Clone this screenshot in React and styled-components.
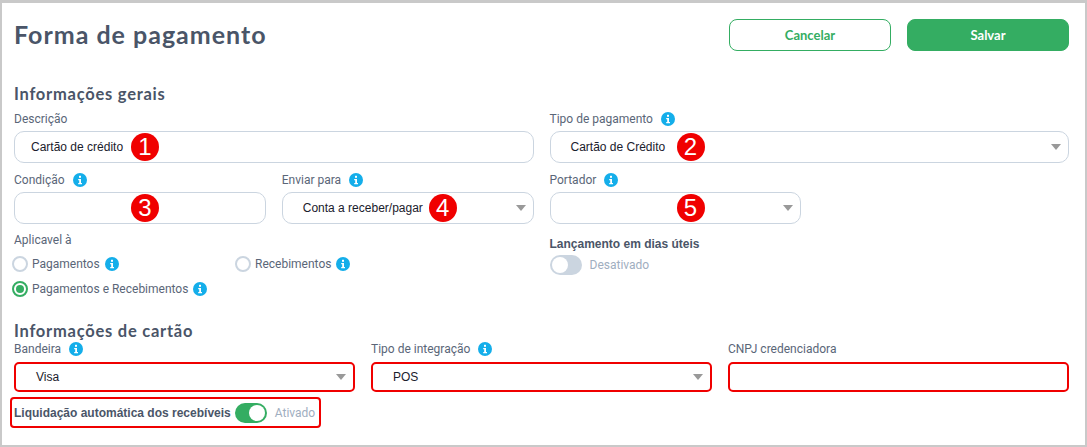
import React from "react"
import styled, { createGlobalStyle } from "styled-components"

const GlobalStyle = createGlobalStyle`
  html, body {
    margin: 0;
    padding: 0;
    background: #fff;
  }
  * {
    box-sizing: border-box;
  }
`

const Frame = styled.div`
  position: relative;
  width: 1087px;
  height: 447px;
  border: 2px solid #c9c9c9;
  border-top-width: 3px;
  padding: 0 16px 0 12px;
  background: #fff;
  font-family: Lato, "Liberation Sans", sans-serif;
  overflow: hidden;
`

const Header = styled.header`
  display: flex;
  justify-content: space-between;
  align-items: center;
  height: 32px;
  margin-top: 16px;
`

const Title = styled.h1`
  margin: 0 0 2px;
  font-size: 25px;
  font-weight: 700;
  letter-spacing: 1px;
  color: #4a5568;
`

const Actions = styled.div`
  display: flex;
  gap: 16px;
`

const Button = styled.button`
  width: 162px;
  height: 32px;
  margin-left: ${(p) => (p.$primary ? 0 : -1)}px;
  border: 1px solid #34ad62;
  border-radius: 8px;
  background: ${(p) => (p.$primary ? "#34ad62" : "#fff")};
  color: ${(p) => (p.$primary ? "#fff" : "#34ad62")};
  font-family: Lato, sans-serif;
  font-size: 13px;
  font-weight: 700;
`

const SectionTitle = styled.h2`
  margin: ${(p) => p.$top}px 0 0;
  height: 18px;
  font-size: 16.5px;
  line-height: 18px;
  font-weight: 700;
  letter-spacing: 0.75px;
  color: #4a5568;
`

const Row = styled.div`
  display: grid;
  grid-template-columns: repeat(${(p) => p.$cols}, 1fr);
  column-gap: 16px;
  margin-top: ${(p) => p.$top || 0}px;
`

const Field = styled.div`
  display: flex;
  flex-direction: column;
  min-width: 0;
`

const Label = styled.label`
  display: flex;
  align-items: center;
  gap: 8px;
  height: 18px;
  margin-bottom: ${(p) => p.$gap ?? 3}px;
  font-family: Roboto, sans-serif;
  font-size: 12px;
  color: #5a6678;
`

const Control = styled.div`
  position: relative;
  display: flex;
  align-items: center;
  height: ${(p) => (p.$alert ? 30 : 32)}px;
  padding-left: ${(p) => (p.$select ? 20 : 16)}px;
  border: ${(p) => (p.$alert ? "2px solid #f00000" : "1px solid #cbd5e0")};
  border-radius: ${(p) => (p.$alert ? 5 : 10)}px;
  background: #fff;
  font-family: "Liberation Sans", sans-serif;
  font-size: 12px;
  color: #1a202c;
`

const Arrow = styled.span`
  position: absolute;
  right: 7px;
  top: 50%;
  margin-top: -3px;
  border-left: 5px solid transparent;
  border-right: 5px solid transparent;
  border-top: 6px solid #999;
`

const Badge = styled.span`
  position: absolute;
  left: ${(p) => p.$x}px;
  top: 50%;
  width: 28px;
  height: 28px;
  margin-top: -14px;
  border-radius: 50%;
  background: #f00000;
  color: #fff;
  font-family: "Liberation Sans", sans-serif;
  font-size: 24px;
  line-height: 28px;
  text-align: center;
`

const RadioGrid = styled.div`
  display: grid;
  grid-template-columns: 223px 1fr;
  row-gap: 7px;
  margin-top: 6px;
  margin-left: -2px;
`

const RadioItem = styled.div`
  display: flex;
  align-items: center;
  height: 18px;
  font-family: Roboto, sans-serif;
  font-size: 12px;
  color: #5a6678;
`

const RadioMark = styled.span`
  display: flex;
  align-items: center;
  justify-content: center;
  width: 16px;
  height: 16px;
  margin-right: 4px;
  border: 2px solid ${(p) => (p.$on ? "#34ad62" : "#cbd5e0")};
  border-radius: 50%;
  &::after {
    content: "";
    display: ${(p) => (p.$on ? "block" : "none")};
    width: 8px;
    height: 8px;
    border-radius: 50%;
    background: #34ad62;
  }
`

const InfoWrap = styled.svg`
  flex: none;
  width: 14px;
  height: 14px;
  margin-left: ${(p) => p.$left || 0}px;
`

const BoldLabel = styled.div`
  font-family: "Liberation Sans", sans-serif;
  font-size: 12px;
  font-weight: 700;
  color: #4a5568;
  white-space: nowrap;
  margin-top: ${(p) => p.$top || 0}px;
`

const SwitchRow = styled.div`
  display: flex;
  align-items: center;
  gap: 8px;
  margin-top: ${(p) => p.$top || 0}px;
`

const Track = styled.span`
  display: flex;
  justify-content: ${(p) => (p.$on ? "flex-end" : "flex-start")};
  align-items: center;
  width: 32px;
  height: 20px;
  padding: 2px;
  border-radius: 10px;
  background: ${(p) => (p.$on ? "#34ad62" : "#cbd5e0")};
  &::after {
    content: "";
    width: 16px;
    height: 16px;
    border-radius: 50%;
    background: #fff;
  }
`

const SwitchText = styled.span`
  font-family: Roboto, sans-serif;
  font-size: 12px;
  color: #a0aec0;
`

const Highlight = styled.div`
  display: inline-flex;
  align-items: center;
  gap: 4px;
  width: 311px;
  height: 31px;
  margin: 5px 0 0 -4px;
  padding-left: 2px;
  border: 2px solid #f00000;
  border-radius: 4px;
`

const Info = ({ left }) => (
  <InfoWrap viewBox="0 0 14 14" $left={left}>
    <circle cx="7" cy="7" r="7" fill="#14aeea" />
    <rect x="6" y="2.8" width="2" height="2" fill="#fff" />
    <path d="M5.2 6h2.8v4h1v1.2H5.2V10h1V7.2h-1z" fill="#fff" />
  </InfoWrap>
)

const Radio = ({ on, children }) => (
  <RadioItem>
    <RadioMark $on={on} />
    {children}
    <Info left={5} />
  </RadioItem>
)

export default function App() {
  return (
    <>
      <GlobalStyle />
      <Frame>
        <Header>
          <Title>Forma de pagamento</Title>
          <Actions>
            <Button>Cancelar</Button>
            <Button $primary>Salvar</Button>
          </Actions>
        </Header>

        <SectionTitle $top={34}>Informações gerais</SectionTitle>
        <Row $cols={2} $top={7}>
          <Field>
            <Label>Descrição</Label>
            <Control>
              Cartão de crédito
              <Badge $x={116}>1</Badge>
            </Control>
          </Field>
          <Field>
            <Label>
              Tipo de pagamento <Info />
            </Label>
            <Control $select>
              Cartão de Crédito
              <Badge $x={126}>2</Badge>
              <Arrow />
            </Control>
          </Field>
        </Row>
        <Row $cols={4} $top={8}>
          <Field>
            <Label>
              Condição <Info />
            </Label>
            <Control>
              <Badge $x={116}>3</Badge>
            </Control>
          </Field>
          <Field>
            <Label>
              Enviar para <Info />
            </Label>
            <Control $select>
              Conta a receber/pagar
              <Badge $x={146}>4</Badge>
              <Arrow />
            </Control>
          </Field>
          <Field>
            <Label>
              Portador <Info />
            </Label>
            <Control $select>
              <Badge $x={126}>5</Badge>
              <Arrow />
            </Control>
          </Field>
        </Row>
        <Row $cols={2} $top={7}>
          <Field>
            <Label $gap={0}>Aplicavel à</Label>
            <RadioGrid>
              <Radio>Pagamentos</Radio>
              <Radio>Recebimentos</Radio>
              <Radio on>Pagamentos e Recebimentos</Radio>
            </RadioGrid>
          </Field>
          <Field>
            <BoldLabel $top={6}>Lançamento em dias úteis</BoldLabel>
            <SwitchRow $top={4}>
              <Track />
              <SwitchText>Desativado</SwitchText>
            </SwitchRow>
          </Field>
        </Row>

        <SectionTitle $top={24}>Informações de cartão</SectionTitle>
        <Row $cols={3} $top={0}>
          <Field>
            <Label $gap={4}>
              Bandeira <Info />
            </Label>
            <Control $select $alert>
              Visa
              <Arrow />
            </Control>
          </Field>
          <Field>
            <Label $gap={4}>
              Tipo de integração <Info />
            </Label>
            <Control $select $alert>
              POS
              <Arrow />
            </Control>
          </Field>
          <Field>
            <Label $gap={4}>CNPJ credenciadora</Label>
            <Control $alert />
          </Field>
        </Row>
        <Highlight>
          <BoldLabel>Liquidação automática dos recebíveis</BoldLabel>
          <SwitchRow>
            <Track $on />
            <SwitchText>Ativado</SwitchText>
          </SwitchRow>
        </Highlight>
      </Frame>
    </>
  )
}
